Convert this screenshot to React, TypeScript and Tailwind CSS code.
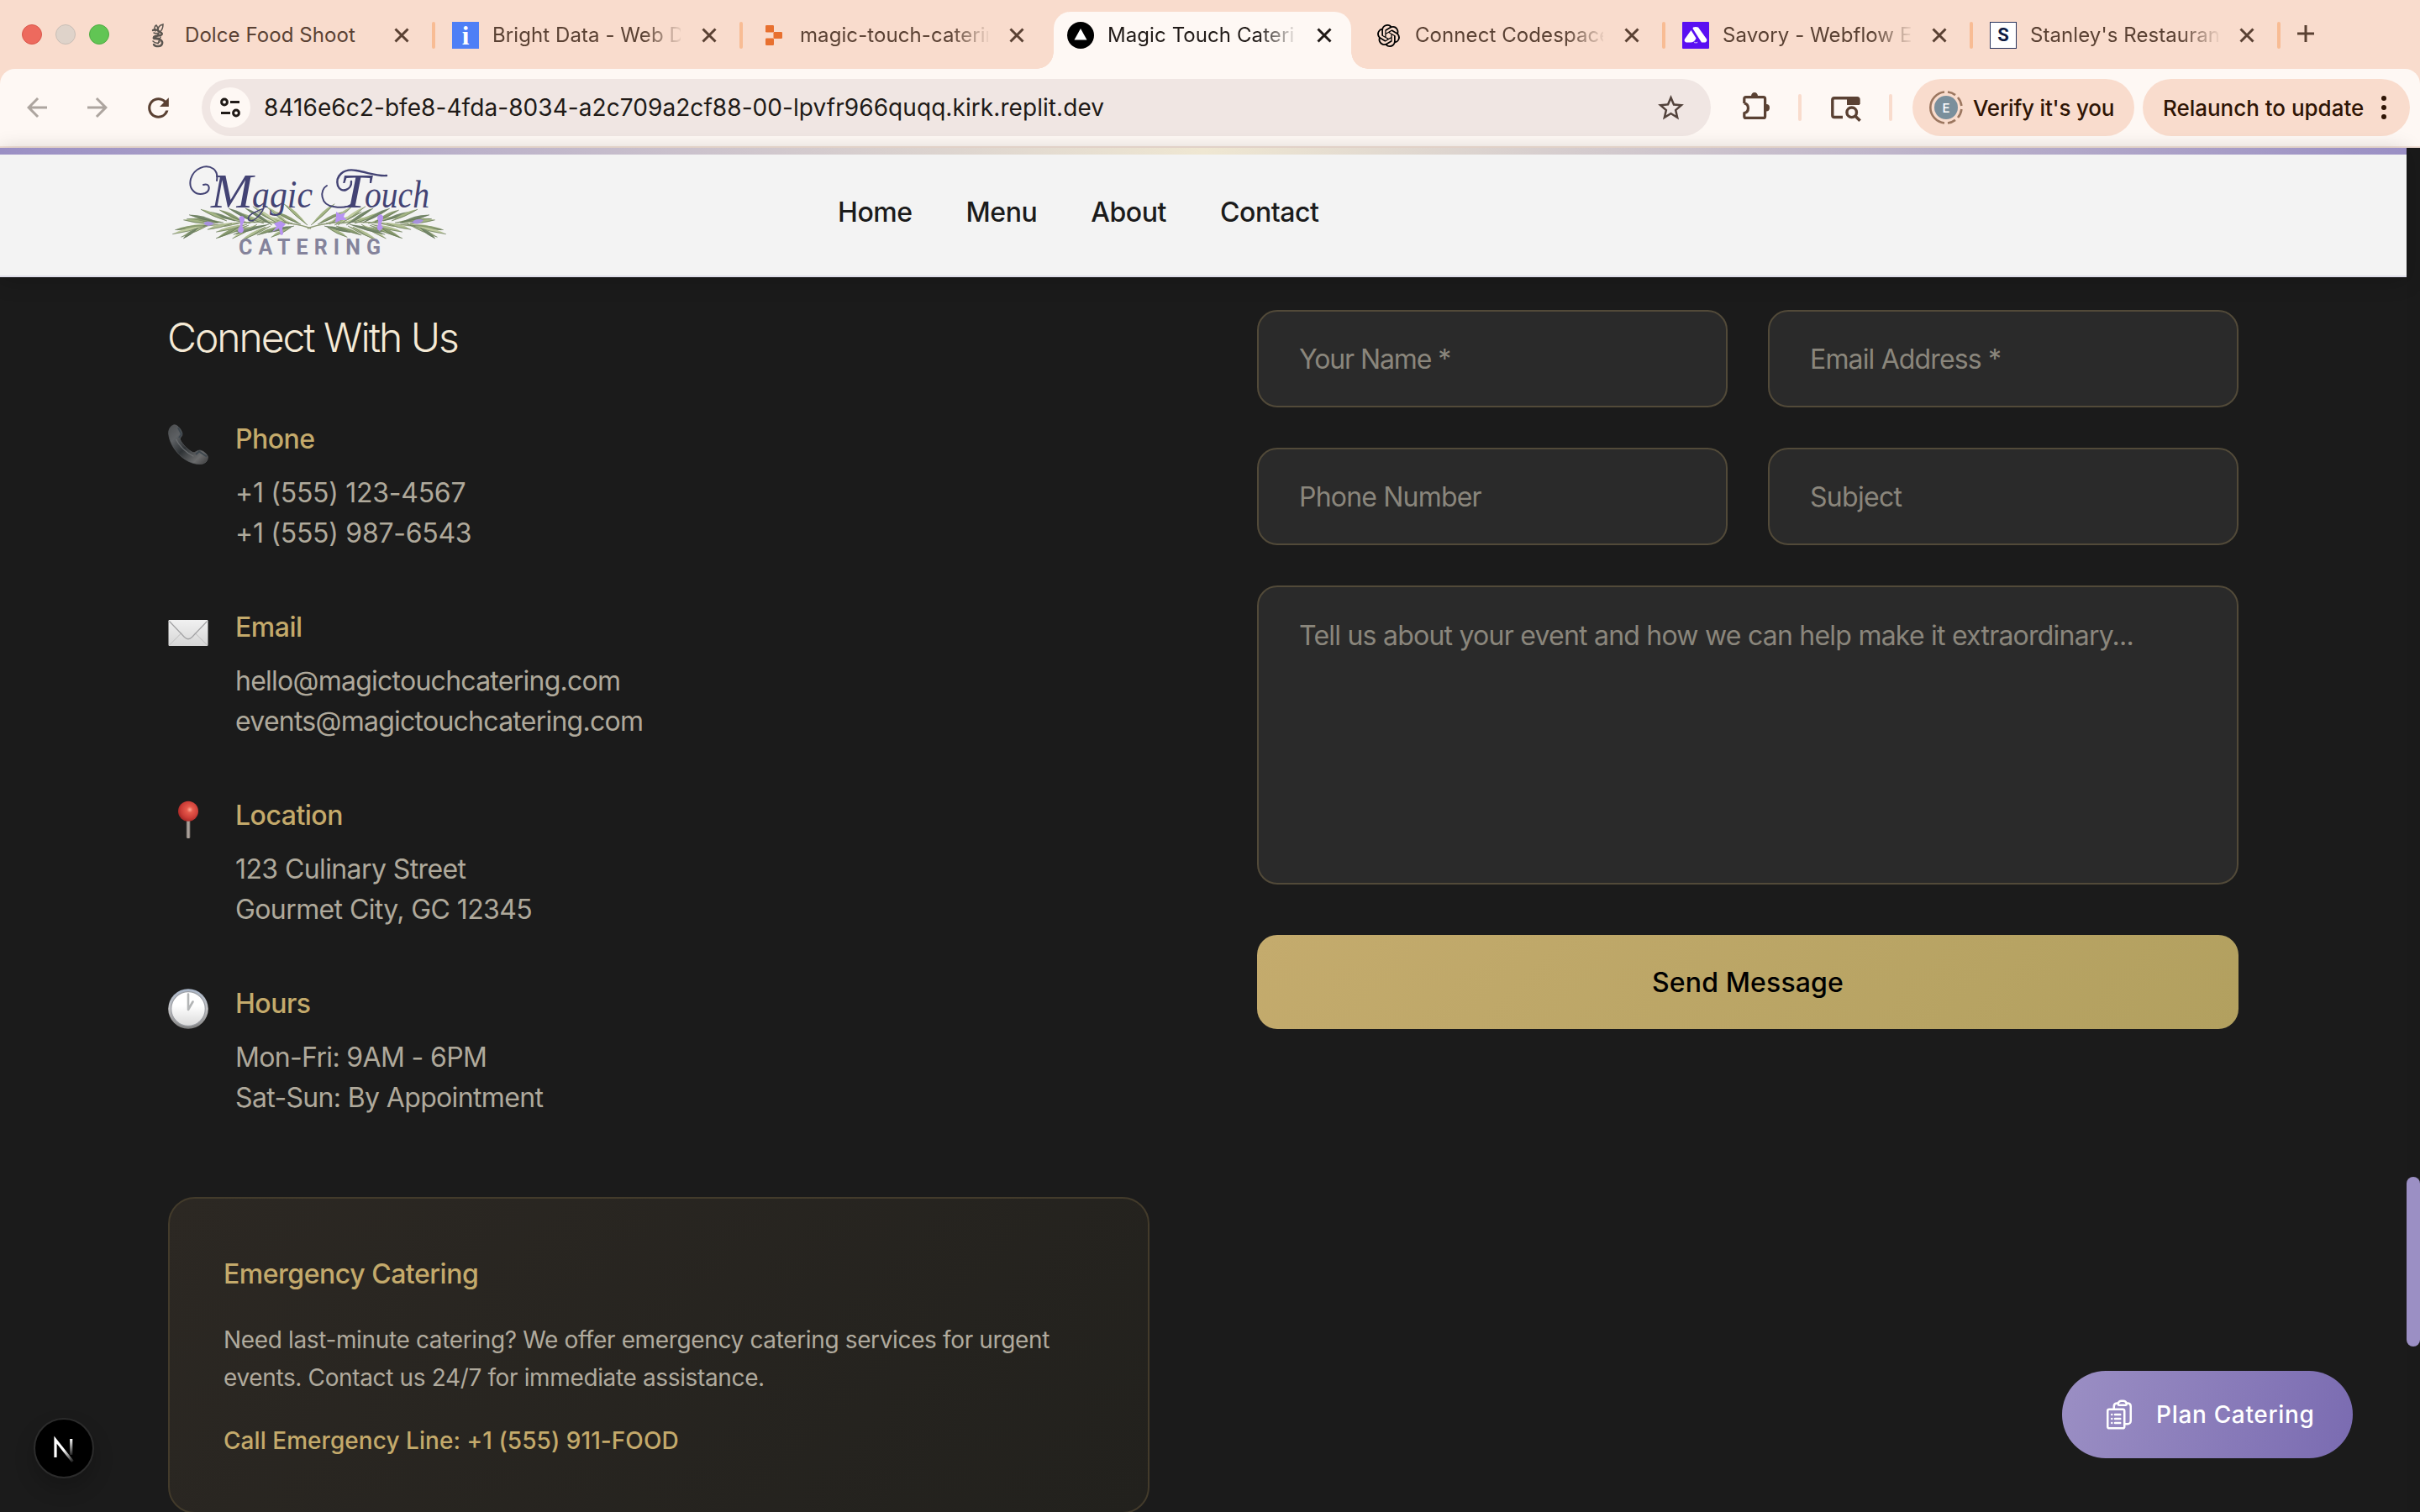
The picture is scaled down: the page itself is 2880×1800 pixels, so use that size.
import type { ReactNode } from 'react';
import { MdArrowBack, MdArrowForward, MdRefresh, MdStarBorder } from 'react-icons/md';
import { HiOutlineClipboardDocumentList } from 'react-icons/hi2';
import { SiOpenai } from 'react-icons/si';

/* ---------- Tab favicons ---------- */

function DolceIcon() {
  return (
    <svg viewBox="0 0 32 32" className="size-8" fill="none" stroke="#5b554f" strokeWidth="1.5" strokeLinecap="round">
      <path d="M17 11C15 8 17 4 22 3c0 4-1 7-4 9M13 11c-2-3-1-6 1-7 2 2 2 5 2 7" />
      <path d="M10 10c3-2 6 0 8 2 3 1 4 3 1 4l-6 1c-3 1-3 3 0 3 6 0 9 3 8 6-1 4-8 4-10 1" strokeWidth="2.4" />
      <path d="M11 13c2 1 4 1 6 0M14 19c3 0 5 1 6 4M10 23c2 2 5 3 8 1M17 14l-5 6M19 18l-3 8" />
    </svg>
  );
}

function BrightDataIcon() {
  return (
    <div className="flex size-8 items-center justify-center bg-[#4e7ff6] font-['Liberation_Serif',serif] text-[31px] leading-none font-bold text-white">
      i
    </div>
  );
}

function ReplitIcon() {
  return (
    <svg viewBox="0 0 32 32" className="size-8" fill="#e8702f">
      <rect x="7" y="4" width="10" height="8.5" rx="1.2" />
      <rect x="16.5" y="12" width="10.5" height="8" rx="1.2" />
      <rect x="7" y="19.5" width="10" height="8.5" rx="1.2" />
    </svg>
  );
}

function TriangleIcon() {
  return (
    <svg viewBox="0 0 32 32" className="size-8">
      <circle cx="16" cy="16" r="16" fill="#000" />
      <path d="M16 8l7.5 13.5h-15z" fill="#fff" />
    </svg>
  );
}

function SavoryIcon() {
  return (
    <svg viewBox="0 0 32 32" className="size-8">
      <rect width="32" height="32" rx="1" fill="#5a10f2" />
      <path
        d="M13 6.500c1.500-.8 4.500-.8 6 0L29 20.500c1 2-.5 4-2.500 4h-3.500L12.500 8zM10.500 10l6 9.500c-1 3-3.500 5-7 5H6c-3 0-4-2-3-4zM14 23.500c1.500 1.500 3 1.500 4.500 0l-.8 1.800h-3z"
        fill="#fff"
      />
    </svg>
  );
}

function StanleyIcon() {
  return (
    <div className="flex size-8 items-center justify-center border border-[#27335c] bg-white font-['Roboto',sans-serif] text-[22px] leading-none font-bold text-[#0d1a42]">
      S
    </div>
  );
}

/* ---------- Browser chrome ---------- */

type Tab = { title: string; icon: ReactNode; separator: boolean; active?: boolean; faded?: boolean };

const tabs: Tab[] = [
  { title: 'Dolce Food Shoot', icon: <DolceIcon />, separator: true },
  { title: 'Bright Data - Web D', icon: <BrightDataIcon />, separator: true, faded: true },
  { title: 'magic-touch-caterin', icon: <ReplitIcon />, separator: false, faded: true },
  { title: 'Magic Touch Caterin', icon: <TriangleIcon />, separator: false, active: true, faded: true },
  { title: 'Connect Codespace', icon: <div className="flex size-8 items-center justify-center"><SiOpenai className="size-[27px] text-black" /></div>, separator: true, faded: true },
  { title: 'Savory - Webflow E', icon: <SavoryIcon />, separator: true, faded: true },
  { title: "Stanley's Restauran", icon: <StanleyIcon />, separator: true, faded: true },
];

function BrowserTab({ tab }: { tab: Tab }) {
  return (
    <div className="relative flex h-[82px] w-[366px] shrink-0 items-center pt-0.5 pl-5">
      {tab.active && (
        <div className="absolute top-3.5 right-2 bottom-0 left-1 rounded-t-[20px] bg-[#fef8f4] before:absolute before:bottom-0 before:-left-5 before:size-5 before:bg-[radial-gradient(circle_at_0_0,transparent_19.5px,#fef8f4_20px)] after:absolute after:-right-5 after:bottom-0 after:size-5 after:bg-[radial-gradient(circle_at_100%_0,transparent_19.5px,#fef8f4_20px)]" />
      )}
      <div className="relative shrink-0">{tab.icon}</div>
      <div
        className={`relative ml-4 w-56 shrink-0 text-2xl tracking-[0.08px] whitespace-nowrap ${
          tab.active ? 'text-[#201a17]' : 'text-[#5a4133]'
        } ${tab.faded ? '[mask-image:linear-gradient(to_right,#000_80%,transparent_102%)]' : ''}`}
      >
        {tab.title}
      </div>
      <svg
        viewBox="0 0 24 24"
        className={`relative ml-[22px] size-6 shrink-0 ${tab.active ? 'text-[#201a17]' : 'text-[#5a4133]'}`}
        stroke="currentColor"
        strokeWidth="3"
      >
        <path d="M4.500 4.500l15 15M19.500 4.500l-15 15" />
      </svg>
      {tab.separator && <div className="ml-6 h-8 w-1 rounded-full bg-[#f8bc94]" />}
    </div>
  );
}

function TabStrip() {
  return (
    <div className="flex h-[82px] shrink-0 items-center bg-[#f9dccd]">
      <div className="flex w-[152px] gap-4 pl-[26px]">
        <div className="size-6 rounded-full border border-[#d9574b] bg-[#ed6a5e]" />
        <div className="size-6 rounded-full border border-[#c9beb6] bg-[#dfd3ca]" />
        <div className="size-6 rounded-full border border-[#4fab43] bg-[#61c554]" />
      </div>
      {tabs.map((tab) => (
        <BrowserTab key={tab.title} tab={tab} />
      ))}
      <svg viewBox="0 0 24 24" className="mb-0.5 ml-[18px] size-6" stroke="#5a4133" strokeWidth="3">
        <path d="M12 2v20M2 12h20" />
      </svg>
    </div>
  );
}

function PuzzleIcon() {
  return (
    <svg viewBox="0 0 48 48" className="size-12" fill="none" stroke="#5a4133" strokeWidth="3.2" strokeLinejoin="round">
      <path d="M10.800 19V13.600Q10.800 11.600 12.800 11.600H33.600Q35.600 11.600 35.600 13.600V34.400Q35.600 36.400 33.600 36.400H12.800Q10.800 36.400 10.800 34.400V30.500C17 29.500 17 20 10.800 19" />
      <path d="M19 10.500a4 4.500 0 0 1 8 0zM37 20a4 4.200 0 0 1 0 8.400z" fill="#5a4133" stroke="none" />
    </svg>
  );
}

function PanelSearchIcon() {
  return (
    <svg viewBox="0 0 48 48" className="size-12" fill="none" stroke="#5a4133" strokeWidth="3.4">
      <path d="M21 35.500H11Q8.800 35.500 8.800 33.300V15Q8.800 12.800 11 12.800H38Q40 12.800 40 14.800V20" />
      <path d="M26 11.500h12q3 0 3 3V21H26z" fill="#5a4133" stroke="none" />
      <circle cx="31.700" cy="29.800" r="5.800" />
      <path d="M35.800 34l5.800 5.800" strokeWidth="3.600" />
    </svg>
  );
}

function Toolbar() {
  return (
    <div className="flex h-[94px] shrink-0 bg-[#f9dccd]">
      <div className="flex w-full items-center rounded-t-[18px] border-b-2 border-[#f3e1d7] bg-[#fef8f4] pr-3 pl-5">
        <div className="flex size-12 items-center justify-center text-[#ada59f]">
          <MdArrowBack className="size-9" />
        </div>
        <div className="ml-6 flex size-12 items-center justify-center text-[#ada59f]">
          <MdArrowForward className="size-9" />
        </div>
        <div className="ml-6 flex size-12 items-center justify-center text-[#5a4133]">
          <MdRefresh className="size-[37px]" />
        </div>
        <div className="ml-7 flex h-[68px] w-[1796px] items-center rounded-full bg-[#f0e6e3] pl-2.5">
          <div className="flex size-12 items-center justify-center rounded-full bg-[#fef8f4]">
            <svg viewBox="0 0 48 48" className="size-12" fill="none" stroke="#201a17" strokeWidth="3">
              <circle cx="17" cy="17.500" r="3.400" />
              <path d="M24 17.500h11M13 30.500h11" />
              <circle cx="31" cy="30.500" r="3.400" />
            </svg>
          </div>
          <div className="ml-4 text-[28px] tracking-[0.07px] text-[#201a17]">
            8416e6c2-bfe8-4fda-8034-a2c709a2cf88-00-lpvfr966quqq.kirk.replit.dev
          </div>
          <MdStarBorder className="mr-[29px] ml-auto size-[37px] text-[#53433c]" />
        </div>
        <div className="ml-[29px]">
          <PuzzleIcon />
        </div>
        <div className="ml-[27px] h-8 w-1 rounded-full bg-[#f9dccd]" />
        <div className="ml-7">
          <PanelSearchIcon />
        </div>
        <div className="ml-7 h-8 w-1 rounded-full bg-[#f9dccd]" />
        <div className="ml-6 flex h-[68px] w-[264px] items-center rounded-full bg-[#f9dccd] pl-5">
          <div className="relative flex size-10 items-center justify-center">
            <svg viewBox="0 0 40 40" className="absolute inset-0 size-10" fill="none" stroke="#9c7760" strokeWidth="2.600">
              <path d="M18 1.500A18.600 18.600 0 0 0 18 38.500M22 1.500a18.600 18.600 0 0 1 9 3.600M34 8a18.600 18.600 0 0 1 4.400 10M38.400 22a18.600 18.600 0 0 1-4.400 10M31 34.900a18.600 18.600 0 0 1-9 3.600" />
            </svg>
            <div className="flex size-7 items-center justify-center rounded-full bg-[#7a8f9c] text-[15px] leading-none font-medium text-white">E</div>
          </div>
          <div className="ml-3 pt-px text-[26px] font-[450] tracking-[-0.2px] text-[#2f1505]">Verify it's you</div>
        </div>
        <div className="ml-2.5 flex h-[68px] w-[318px] items-center rounded-full bg-[#f9dccd] pl-6">
          <div className="pt-px text-[26px] font-[450] tracking-[-0.02px] whitespace-nowrap text-[#2f1505]">Relaunch to update</div>
          <div className="ml-[21px] flex flex-col gap-[5px]">
            <div className="size-1.5 rounded-full bg-[#2f1505]" />
            <div className="size-1.5 rounded-full bg-[#2f1505]" />
            <div className="size-1.5 rounded-full bg-[#2f1505]" />
          </div>
        </div>
      </div>
    </div>
  );
}

/* ---------- Site header ---------- */

const leafColors = ['#a3b484', '#8a9c70', '#bfcb9f', '#75886a', '#b0be92'];

// x, y, length and angle (degrees, measured from the outward direction; negative is up)
const leaves: [number, number, number, number][] = [
  [166, 72, 38, -42], [158, 71, 34, -26], [148, 70, 30, -14], [150, 73, 32, 14], [144, 71, 34, -38], [138, 72, 36, -26], [136, 73, 32, 20],
  [130, 70, 34, -12], [124, 72, 38, -32], [122, 73, 34, 26], [114, 70, 36, -22], [112, 73, 34, 12], [106, 71, 34, 30],
  [104, 69, 36, -28], [98, 70, 34, -14], [96, 72, 42, 22], [90, 68, 32, -26], [84, 70, 32, 8], [80, 67, 36, -18],
  [76, 70, 30, 14], [70, 67, 34, -24], [66, 69, 44, -6], [60, 69, 50, 10], [58, 68, 34, -14], [52, 70, 40, 24],
  [48, 70, 30, -8], [48, 72, 40, 8], [44, 73, 40, 14], [36, 75, 22, 36], [116, 74, 34, 30], [146, 75, 26, 26],
  [88, 72, 32, 28], [134, 72, 40, -34], [120, 71, 44, 16], [94, 71, 38, 14],
];

function SprigHalf() {
  return (
    <g>
      <path d="M170 76C140 64 90 68 34 74" fill="none" stroke="#8e9a76" strokeWidth="1.500" />
      {leaves.map(([x, y, l, a], i) => (
        <g key={i} transform={`translate(${x} ${y}) rotate(${-a})`}>
          <path d={`M0 0Q${-l * 0.6} -4.600 ${-l} 0Q${-l * 0.5} 2.800 0 0`} fill={leafColors[i % 5]} />
          <path d={`M0 0Q${-l * 0.5} 2.200 ${-l} 0`} fill="none" stroke="#5f7053" strokeWidth=".6" />
        </g>
      ))}
    </g>
  );
}

function Logo() {
  return (
    <svg viewBox="0 0 336 112" className="h-28 w-[336px]">
      <SprigHalf />
      <g transform="matrix(-1 0 0 1 336 0)">
        <SprigHalf />
      </g>
      <g fill="#b793f2">
        <path d="M42 70q4-5 13 0q-7 6-13 0z" fill="#a792dd" />
        <path d="M88 61q5 2 2 8q-3 4 0 8q0 5-5 4q-4-2 0-7q2-4 0-8q-2-4 3-5z" />
        <path d="M126 70l8-3 6 4-4 4 1 8-3 1-2-8-8 4 5-6z" />
        <path d="M200 56l5 3 6-2-2 5 4 4-7 0-7 3 1-7z" />
        <path d="M253 59q5 2 2 8q-3 4 1 8l-4 4q-5-2-2-8q1-4-1-7q0-4 4-5z" />
        <path d="M290 69q5-6 14-3q-5 7-14 3z" fill="#a792dd" />
      </g>
      <g fill="none" stroke="#434374" strokeLinecap="round">
        <path d="M42 24C50 21 51 31 44 34C33 38 24 29 27 17C31 4 45-1 54 5C58 8 59 13 58 19" strokeWidth="2" />
        <path d="M218 20C219 30 206 35 202 25C199 14 208 4 224 7C240 10 250 14 260 13" strokeWidth="2.400" />
        <path d="M189 25C180 30 181 48 197 50C208 52 216 50 220 46" strokeWidth="2" />
        <path d="M115 48C112 60 100 70 96 66C93 60 104 56 114 52" strokeWidth="1.500" />
      </g>
      <text y="51" fill="#434374" fontFamily="Liberation Serif, serif" fontStyle="italic" fontSize="47">
        <tspan x="51" fontSize="58" textLength="50" lengthAdjust="spacingAndGlyphs">M</tspan>
        <tspan x="100" textLength="72" lengthAdjust="spacingAndGlyphs">agic</tspan>
        <tspan x="192"> </tspan>
        <tspan x="204" fontSize="58" textLength="36" lengthAdjust="spacingAndGlyphs">T</tspan>
        <tspan x="234" textLength="77" lengthAdjust="spacingAndGlyphs">ouch</tspan>
      </text>
      <text x="84" y="107" fill="#84839b" fontFamily="Roboto, sans-serif" fontWeight="700" fontSize="25" textLength="169" lengthAdjust="spacing">
        CATERING
      </text>
    </svg>
  );
}

function SiteHeader() {
  return (
    <header className="relative flex h-[154px] shrink-0 items-center border-b-2 border-[#dfdee9] bg-[#f3f3f3] pl-[200px] shadow-[0_4px_24px_rgba(0,0,0,0.2)]">
      <div className="absolute inset-x-0 top-0 h-2 bg-[linear-gradient(90deg,#9a8fc4,#efe7d2,#9a8fc4)]" />
      <Logo />
      <nav className="ml-[461px] flex gap-16 pt-0.5 text-[32px] leading-none font-[450] tracking-[-0.45px] text-[#1b1b1b]">
        <a>Home</a>
        <a>Menu</a>
        <a>About</a>
        <a>Contact</a>
      </nav>
    </header>
  );
}

/* ---------- Contact details ---------- */

function PhoneIcon() {
  return (
    <svg viewBox="0 0 48 48" className="size-12">
      <defs>
        <linearGradient id="handset" x1="0" y1="0" x2="1" y2="1">
          <stop offset="0" stopColor="#4a4c4e" />
          <stop offset=".25" stopColor="#5d6063" />
          <stop offset=".5" stopColor="#2f3336" />
          <stop offset=".8" stopColor="#6a6b6c" />
          <stop offset="1" stopColor="#3c3c3c" />
        </linearGradient>
      </defs>
      <path
        d="M7 .8C3 2 .5 6 .6 11C1.500 22 8 32 17 39.500C25 46 34 48.500 41 47.200C45.500 46 47.600 42.500 47.400 39C47 35.500 41 31 37.500 31C34 31 32.500 34.500 29.500 33.500C24 31 17 24 14.500 18.500C13.500 15.500 17.500 14.500 17 11.500C16.500 8 12 .2 7 .8z"
        fill="url(#handset)"
        stroke="#5a5d60"
        strokeWidth=".7"
      />
      <path d="M9.500 18C13 26 22 34 30 38" fill="none" stroke="#777b7e" strokeWidth="1.200" strokeLinecap="round" opacity=".7" />
      <path d="M12 4l4 8-3 4" fill="none" stroke="#3d464d" strokeWidth="2" />
      <path d="M33 36l4-3.500 9 6" fill="none" stroke="#3d464d" strokeWidth="2" />
    </svg>
  );
}

function EnvelopeIcon() {
  return (
    <svg viewBox="0 0 48 48" className="size-12">
      <defs>
        <linearGradient id="paper" x1="0" y1="0" x2="0" y2="1">
          <stop offset="0" stopColor="#f1f1f1" />
          <stop offset="1" stopColor="#d6d6d6" />
        </linearGradient>
      </defs>
      <rect x=".5" y="9" width="47" height="31" rx="1.200" fill="url(#paper)" />
      <path d="M1.500 39L16 24.500M46.500 39L32 24.500" fill="none" stroke="#bcbcbc" strokeWidth="1" />
      <path d="M1.500 10.500L19.500 29.500Q24 34 28.500 29.500L46.500 10.500" fill="none" stroke="#a2a2a4" strokeWidth="1.200" />
    </svg>
  );
}

function PinIcon() {
  return (
    <svg viewBox="0 0 48 48" className="size-12">
      <defs>
        <radialGradient id="pinhead" cx=".58" cy=".42" r=".6">
          <stop offset="0" stopColor="#ffa994" />
          <stop offset=".25" stopColor="#e65a4c" />
          <stop offset=".7" stopColor="#cc3d37" />
          <stop offset="1" stopColor="#a82826" />
        </radialGradient>
        <linearGradient id="needle">
          <stop offset="0" stopColor="#75706c" />
          <stop offset=".5" stopColor="#b8ada6" />
          <stop offset="1" stopColor="#6f6661" />
        </linearGradient>
      </defs>
      <rect x="21.800" y="23" width="4.600" height="22" rx="1.500" fill="url(#needle)" />
      <circle cx="24" cy="12.800" r="12" fill="url(#pinhead)" />
    </svg>
  );
}

function ClockIcon() {
  return (
    <svg viewBox="0 0 48 48" className="size-12">
      <defs>
        <linearGradient id="rim" x1="0" y1="0" x2="0" y2="1">
          <stop offset="0" stopColor="#a9b6c9" />
          <stop offset=".5" stopColor="#c3c3c5" />
          <stop offset="1" stopColor="#7e7e7e" />
        </linearGradient>
        <linearGradient id="face" x1="0" y1="0" x2="0" y2="1">
          <stop offset=".4" stopColor="#ffffff" />
          <stop offset="1" stopColor="#dadada" />
        </linearGradient>
      </defs>
      <circle cx="24" cy="24" r="23.800" fill="url(#rim)" />
      <circle cx="24" cy="24" r="20.300" fill="url(#face)" stroke="#9a9da3" strokeWidth="1.200" />
      <path d="M24 6.500V25L29.500 15.500" fill="none" stroke="#b3b5b6" strokeWidth="2.600" strokeLinejoin="round" strokeLinecap="round" />
    </svg>
  );
}

type Contact = { title: string; icon: ReactNode; lines: string[]; tracking: string };

const contacts: Contact[] = [
  { title: 'Phone', icon: <PhoneIcon />, lines: ['+1 (555) 123-4567', '+1 (555) 987-6543'], tracking: 'tracking-[-0.28px]' },
  { title: 'Email', icon: <EnvelopeIcon />, lines: ['hello@magictouchcatering.com', 'events@magictouchcatering.com'], tracking: 'tracking-[-0.75px]' },
  { title: 'Location', icon: <PinIcon />, lines: ['123 Culinary Street', 'Gourmet City, GC 12345'], tracking: 'tracking-[-0.6px]' },
  { title: 'Hours', icon: <ClockIcon />, lines: ['Mon-Fri: 9AM - 6PM', 'Sat-Sun: By Appointment'], tracking: 'tracking-[-0.65px]' },
];

function ContactDetails() {
  return (
    <section className="w-[1168px] pt-12">
      <h2 className="mb-[73px] -ml-px text-5xl leading-none font-light tracking-[-2.03px] text-[#f5ead6]">Connect With Us</h2>
      <div className="flex flex-col gap-16">
        {contacts.map((c) => (
          <div key={c.title} className="flex gap-8">
            <div className="mt-1.5 shrink-0">{c.icon}</div>
            <div className="text-[32px] leading-[48px]">
              <h3 className="mb-4 font-[450] tracking-[-0.5px] text-[#c4aa6b]">{c.title}</h3>
              {c.lines.map((line) => (
                <p key={line} className={`text-[#afa99b] ${c.tracking}`}>
                  {line}
                </p>
              ))}
            </div>
          </div>
        ))}
      </div>
      <div className="mt-[94px] rounded-[32px] border-2 border-[#433b2b] bg-[linear-gradient(135deg,#2c2823,#22211d)] px-16 pt-[66px] pb-[62px]">
        <h3 className="text-[32px] leading-[48px] font-[450] tracking-[-0.48px] text-[#c4aa6b]">Emergency Catering</h3>
        <p className="mt-8 w-[1010px] text-[28px] leading-[45px] tracking-[-0.36px] text-[#b0aa9d]">
          Need last-minute catering? We offer emergency catering services for urgent events. Contact us 24/7 for immediate assistance.
        </p>
        <p className="mt-[30px] text-[28px] leading-[45px] font-[450] tracking-[0.05px] text-[#c4aa6b]">Call Emergency Line: +1 (555) 911-FOOD</p>
      </div>
    </section>
  );
}

/* ---------- Contact form ---------- */

function Field({ placeholder, tracking }: { placeholder: string; tracking: string }) {
  return (
    <input
      placeholder={placeholder}
      className={`h-[116px] w-full rounded-3xl border-2 border-[#524a39] bg-[#2a2a2a] px-12 pt-px text-[32px] placeholder:text-[#8a867c] ${tracking}`}
    />
  );
}

function ContactForm() {
  return (
    <form className="flex w-[1168px] flex-col pt-[39px]">
      <div className="grid grid-cols-2 gap-12">
        <Field placeholder="Your Name *" tracking="tracking-[-1.1px]" />
        <Field placeholder="Email Address *" tracking="tracking-[-0.85px]" />
        <Field placeholder="Phone Number" tracking="tracking-[-0.8px]" />
        <Field placeholder="Subject" tracking="tracking-[-0.7px]" />
      </div>
      <textarea
        placeholder="Tell us about your event and how we can help make it extraordinary..."
        className="mt-12 h-[356px] w-full resize-none rounded-3xl border-2 border-[#524a39] bg-[#2a2a2a] px-12 pt-[34px] pb-8 text-[32px] leading-[48px] tracking-[-0.77px] placeholder:text-[#8a867c]"
      />
      <button
        type="button"
        className="mt-[60px] h-28 rounded-3xl bg-[linear-gradient(135deg,#c4ab6d,#b2a05f)] pt-0.5 text-[32px] font-medium tracking-[0.14px] text-black"
      >
        Send Message
      </button>
    </form>
  );
}

function NextBadge() {
  return (
    <div className="absolute top-[1688px] left-10 flex size-[72px] items-center justify-center rounded-full border-2 border-[#2c2c2c] bg-black shadow-[0_12px_24px_rgba(0,0,0,0.2)]">
      <svg viewBox="0 0 72 72" className="size-[72px] shrink-0" fill="none" strokeWidth="3.200">
        <defs>
          <linearGradient id="next-stem" x1="0" y1="25" x2="0" y2="47" gradientUnits="userSpaceOnUse">
            <stop offset="0" stopColor="#fff" />
            <stop offset="1" stopColor="#fff" stopOpacity="0" />
          </linearGradient>
          <linearGradient id="next-diagonal" x1="36" y1="38" x2="47" y2="52" gradientUnits="userSpaceOnUse">
            <stop offset="0" stopColor="#fff" />
            <stop offset="1" stopColor="#fff" stopOpacity="0.1" />
          </linearGradient>
        </defs>
        <path d="M26 47V26L46.500 52" stroke="url(#next-diagonal)" />
        <path d="M44.700 25v19" stroke="url(#next-stem)" />
      </svg>
    </div>
  );
}

function PlanButton() {
  return (
    <button
      type="button"
      className="absolute top-[1632px] left-[2454px] flex h-[104px] w-[346px] items-center rounded-full bg-[linear-gradient(105deg,#9b8fc4,#7a6bb1)] pl-12 text-white"
    >
      <HiOutlineClipboardDocumentList className="size-10 shrink-0" />
      <span className="ml-6 text-[28px] font-[450] tracking-[0.68px] whitespace-nowrap">Plan Catering</span>
    </button>
  );
}

export default function App() {
  return (
    <div className="relative flex h-[1800px] w-[2880px] flex-col overflow-hidden bg-[#1b1b1b] font-['Inter',sans-serif]">
      <TabStrip />
      <Toolbar />
      <div className="flex min-h-0 flex-1">
        <main className="flex w-[2864px] flex-col">
          <SiteHeader />
          <div className="flex gap-32 px-[200px]">
            <ContactDetails />
            <ContactForm />
          </div>
        </main>
        <div className="w-4 bg-[#1a1a1a] pt-[1225px]">
          <div className="h-[202px] w-4 rounded-full bg-[#9b8fc4]" />
        </div>
      </div>
      <NextBadge />
      <PlanButton />
    </div>
  );
}
